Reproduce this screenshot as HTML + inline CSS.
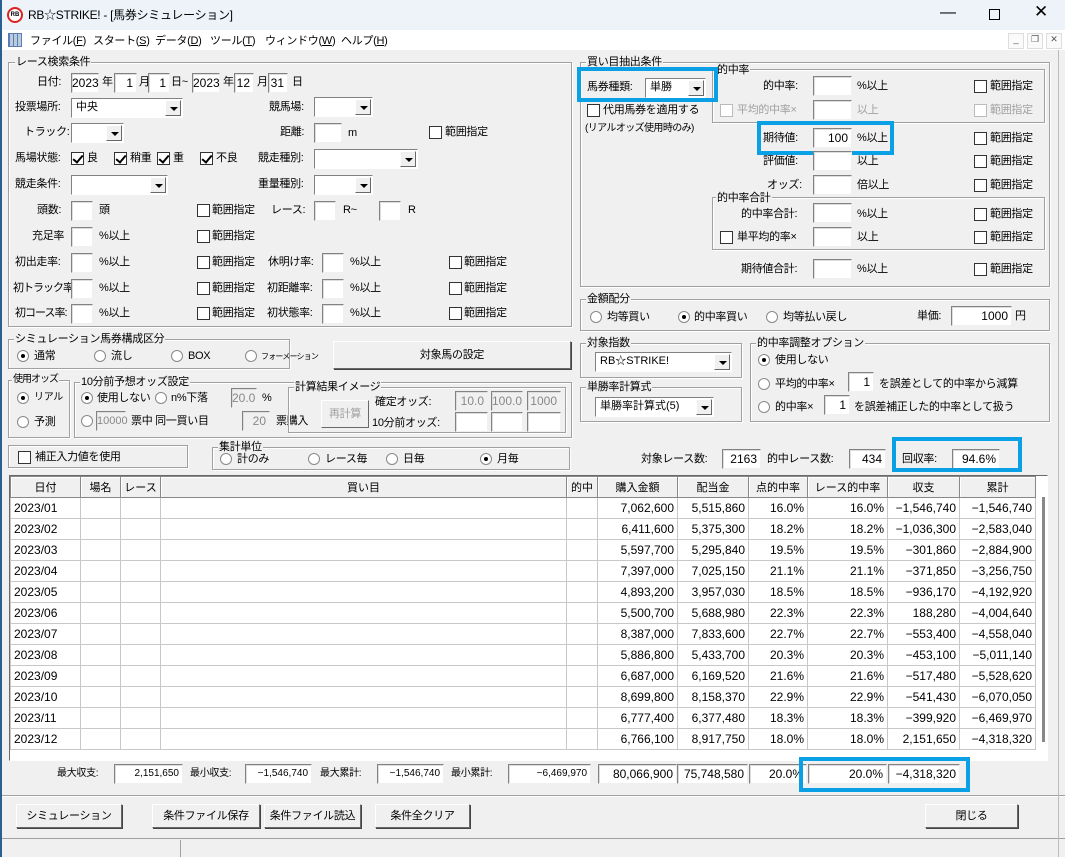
<!DOCTYPE html>
<html><head><meta charset="utf-8"><style>
*{box-sizing:border-box;margin:0;padding:0}
body{width:1065px;height:857px;position:relative;overflow:hidden;background:#f0f0f0;font-family:"Liberation Sans","Noto Sans CJK JP",sans-serif;font-size:11px;color:#000}
.a{position:absolute}
.t{position:absolute;white-space:nowrap;line-height:14px;font-size:11px;letter-spacing:-0.3px}
.g{color:#a0a0a0}
.in{position:absolute;background:#fff;border:1px solid;border-color:#828282 #f0f0f0 #f0f0f0 #828282;box-shadow:inset 1px 1px #ddd;height:20px;text-align:right;padding:2px 3px 0 0;line-height:14px;font-size:12px;white-space:nowrap}
.dis{background:#f0f0f0;color:#888}
.cb{position:absolute;width:13px;height:13px;background:#fff;border:1px solid #333}
.cb.on::after{content:"";position:absolute;left:3px;top:0px;width:4px;height:8px;border:solid #000;border-width:0 2px 2px 0;transform:rotate(40deg)}
.cb.dg{border-color:#bbb}
.rb{position:absolute;width:12px;height:12px;border-radius:50%;background:#fff;border:1px solid #888}
.rb.on::after{content:"";position:absolute;left:3px;top:3px;width:4px;height:4px;border-radius:50%;background:#000}
.grp{position:absolute;border:1px solid #a0a0a0;box-shadow:1px 1px #fff inset,1px 1px #fff}
.lg{position:absolute;top:-8px;left:6px;background:#f0f0f0;padding:0 1px;line-height:14px;white-space:nowrap;font-size:11px;letter-spacing:-0.3px}
.cmb{position:absolute;background:#fff;border:1px solid;border-color:#828282 #fff #fff #828282;height:20px;line-height:17px;padding-left:4px;white-space:nowrap;font-size:11px}
.cmb i{position:absolute;right:1px;top:1px;width:16px;height:16px;background:#f0f0f0;border:1px solid;border-color:#fff #696969 #696969 #fff}
.cmb i::after{content:"";position:absolute;left:4px;top:6px;border:4px solid transparent;border-top:4px solid #000;border-bottom:0}
.btn{position:absolute;background:#f0f0f0;border:1px solid;border-color:#fff #696969 #696969 #fff;box-shadow:1px 1px #444;text-align:center;white-space:nowrap;font-size:11px;letter-spacing:-0.3px}
.blue{position:absolute;border:4px solid #0aa0e6}
table{border-collapse:collapse;table-layout:fixed;font-size:12px}
td{border:1px solid #c8c8c8;height:21px;padding:0 3px;white-space:nowrap;text-align:right;line-height:14px}
td:first-child{text-align:left}
th{font-weight:normal;height:21px;border:1px solid #888;background:#f0f0f0;box-shadow:inset 1px 1px #fff;font-size:11px}
</style></head><body>
<!-- title -->
<div class="a" style="left:0;top:0;width:1065px;height:30px;background:#eef3f9"></div>
<div class="a" style="left:7px;top:7px;width:16px;height:16px;border-radius:50%;border:2px solid #d22;background:#fff;font-size:6px;font-weight:bold;text-align:center;line-height:12px">RB</div>
<div class="t" style="left:28px;top:8px;font-size:12px">RB☆STRIKE! - [馬券シミュレーション]</div>
<div class="t" style="left:940px;top:6px;font-size:16px">—</div>
<div class="a" style="left:989px;top:9px;width:11px;height:11px;border:1px solid #000"></div>
<div class="t" style="left:1034px;top:5px;font-size:17px">✕</div>
<!-- menu -->
<div class="a" style="left:0;top:30px;width:1065px;height:20px;background:#fff"></div>
<div class="a" style="left:8px;top:33px;width:14px;height:14px;background:repeating-linear-gradient(90deg,#5a7ab8 0 1px,#bcd 1px 4px),#bcd;border:1px solid #5a7ab8"></div>
<div class="t" style="left:30px;top:34px">ファイル(<u>F</u>)</div>
<div class="t" style="left:93px;top:34px">スタート(<u>S</u>)</div>
<div class="t" style="left:155px;top:34px">データ(<u>D</u>)</div>
<div class="t" style="left:210px;top:34px">ツール(<u>T</u>)</div>
<div class="t" style="left:265px;top:34px">ウィンドウ(<u>W</u>)</div>
<div class="t" style="left:341px;top:34px">ヘルプ(<u>H</u>)</div>
<div class="a" style="left:1008px;top:33px;width:16px;height:16px;border:1px solid #ddd;background:#fafafa;font-size:9px;text-align:center;color:#555">_</div>
<div class="a" style="left:1027px;top:33px;width:16px;height:16px;border:1px solid #ddd;background:#fafafa;font-size:9px;text-align:center;color:#555">❐</div>
<div class="a" style="left:1046px;top:33px;width:16px;height:16px;border:1px solid #ddd;background:#fafafa;font-size:9px;text-align:center;color:#555">✕</div>
<div class="a" style="left:0;top:0;width:2px;height:857px;background:#2a5f91"></div>

<!-- race search group -->
<div class="grp" style="left:8px;top:62px;width:564px;height:265px"><span class="lg">レース検索条件</span></div>
<div class="t" style="left:37px;top:75px">日付:</div>
<div class="in" style="left:71px;top:73px;width:28px">2023</div><div class="t" style="left:102px;top:75px">年</div>
<div class="in" style="left:114px;top:73px;width:23px">1</div><div class="t" style="left:139px;top:75px">月</div>
<div class="in" style="left:148px;top:73px;width:22px">1</div><div class="t" style="left:171px;top:75px">日~</div>
<div class="in" style="left:192px;top:73px;width:28px">2023</div><div class="t" style="left:223px;top:75px">年</div>
<div class="in" style="left:234px;top:73px;width:20px">12</div><div class="t" style="left:257px;top:75px">月</div>
<div class="in" style="left:268px;top:73px;width:20px">31</div><div class="t" style="left:292px;top:75px">日</div>

<div class="t" style="left:15px;top:100px">投票場所:</div>
<div class="cmb" style="left:71px;top:98px;width:112px">中央<i></i></div>
<div class="t" style="left:269px;top:100px">競馬場:</div>
<div class="cmb" style="left:314px;top:97px;width:59px"><i></i></div>

<div class="t" style="left:24px;top:125px">トラック:</div>
<div class="cmb" style="left:71px;top:123px;width:53px"><i></i></div>
<div class="t" style="left:280px;top:125px">距離:</div>
<div class="in" style="left:314px;top:123px;width:28px"></div><div class="t" style="left:348px;top:126px">m</div>
<div class="cb" style="left:429px;top:126px"></div><div class="t" style="left:445px;top:125px">範囲指定</div>

<div class="t" style="left:15px;top:151px">馬場状態:</div>
<div class="cb on" style="left:71px;top:152px"></div><div class="t" style="left:87px;top:151px">良</div>
<div class="cb on" style="left:114px;top:152px"></div><div class="t" style="left:130px;top:151px">稍重</div>
<div class="cb on" style="left:157px;top:152px"></div><div class="t" style="left:173px;top:151px">重</div>
<div class="cb on" style="left:200px;top:152px"></div><div class="t" style="left:216px;top:151px">不良</div>
<div class="t" style="left:258px;top:151px">競走種別:</div>
<div class="cmb" style="left:314px;top:149px;width:104px"><i></i></div>

<div class="t" style="left:15px;top:177px">競走条件:</div>
<div class="cmb" style="left:71px;top:175px;width:97px"><i></i></div>
<div class="t" style="left:258px;top:177px">重量種別:</div>
<div class="cmb" style="left:314px;top:175px;width:59px"><i></i></div>

<div class="t" style="left:37px;top:203px">頭数:</div>
<div class="in" style="left:71px;top:201px;width:22px"></div><div class="t" style="left:99px;top:203px">頭</div>
<div class="cb" style="left:197px;top:204px"></div><div class="t" style="left:212px;top:203px">範囲指定</div>
<div class="t" style="left:271px;top:203px">レース:</div>
<div class="in" style="left:314px;top:201px;width:22px"></div><div class="t" style="left:343px;top:203px">R~</div>
<div class="in" style="left:379px;top:201px;width:22px"></div><div class="t" style="left:408px;top:203px">R</div>

<div class="t" style="left:32px;top:229px">充足率</div>
<div class="in" style="left:71px;top:227px;width:22px"></div><div class="t" style="left:99px;top:229px">%以上</div>
<div class="cb" style="left:197px;top:230px"></div><div class="t" style="left:212px;top:229px">範囲指定</div>

<div class="t" style="left:15px;top:255px">初出走率:</div>
<div class="in" style="left:71px;top:253px;width:22px"></div><div class="t" style="left:99px;top:255px">%以上</div>
<div class="cb" style="left:197px;top:256px"></div><div class="t" style="left:212px;top:255px">範囲指定</div>
<div class="t" style="left:268px;top:255px">休明け率:</div>
<div class="in" style="left:322px;top:253px;width:22px"></div><div class="t" style="left:350px;top:255px">%以上</div>
<div class="cb" style="left:449px;top:256px"></div><div class="t" style="left:464px;top:255px">範囲指定</div>

<div class="t" style="left:13px;top:281px;letter-spacing:-1px">初トラック率:</div>
<div class="in" style="left:71px;top:279px;width:22px"></div><div class="t" style="left:99px;top:281px">%以上</div>
<div class="cb" style="left:197px;top:282px"></div><div class="t" style="left:212px;top:281px">範囲指定</div>
<div class="t" style="left:267px;top:281px">初距離率:</div>
<div class="in" style="left:322px;top:279px;width:22px"></div><div class="t" style="left:350px;top:281px">%以上</div>
<div class="cb" style="left:449px;top:282px"></div><div class="t" style="left:464px;top:281px">範囲指定</div>

<div class="t" style="left:15px;top:306px;letter-spacing:-1px">初コース率:</div>
<div class="in" style="left:71px;top:304px;width:22px"></div><div class="t" style="left:99px;top:306px">%以上</div>
<div class="cb" style="left:197px;top:307px"></div><div class="t" style="left:212px;top:306px">範囲指定</div>
<div class="t" style="left:267px;top:306px">初状態率:</div>
<div class="in" style="left:322px;top:304px;width:22px"></div><div class="t" style="left:350px;top:306px">%以上</div>
<div class="cb" style="left:449px;top:307px"></div><div class="t" style="left:464px;top:306px">範囲指定</div>

<!-- right group -->
<div class="grp" style="left:580px;top:62px;width:470px;height:225px"><span class="lg" style="left:5px">買い目抽出条件</span></div>
<div class="grp" style="left:712px;top:69px;width:333px;height:54px"><span class="lg" style="left:3px;top:-7px">的中率</span></div>
<div class="t" style="left:587px;top:80px">馬券種類:</div>
<div class="cmb" style="left:645px;top:78px;width:61px">単勝<i></i></div>
<div class="blue" style="left:577px;top:67px;width:141px;height:35px"></div>
<div class="cb" style="left:587px;top:104px"></div><div class="t" style="left:603px;top:103px">代用馬券を適用する</div>
<div class="t" style="left:585px;top:122px;font-size:10px;letter-spacing:-0.6px">(リアルオッズ使用時のみ)</div>

<div class="t" style="left:763px;top:79px">的中率:</div>
<div class="in" style="left:813px;top:76px;width:39px"></div><div class="t" style="left:857px;top:79px">%以上</div>
<div class="cb" style="left:974px;top:80px"></div><div class="t" style="left:990px;top:79px">範囲指定</div>
<div class="cb dg" style="left:720px;top:104px"></div><div class="t g" style="left:737px;top:103px">平均的中率×</div>
<div class="in" style="left:813px;top:100px;width:39px"></div><div class="t g" style="left:857px;top:103px">以上</div>
<div class="cb dg" style="left:974px;top:104px"></div><div class="t g" style="left:990px;top:103px">範囲指定</div>

<div class="t" style="left:763px;top:131px">期待値:</div>
<div class="in" style="left:813px;top:128px;width:39px">100</div><div class="t" style="left:857px;top:131px">%以上</div>
<div class="blue" style="left:757px;top:121px;width:137px;height:34px"></div>
<div class="cb" style="left:974px;top:132px"></div><div class="t" style="left:990px;top:131px">範囲指定</div>
<div class="t" style="left:763px;top:154px">評価値:</div>
<div class="in" style="left:813px;top:151px;width:39px"></div><div class="t" style="left:857px;top:154px">以上</div>
<div class="cb" style="left:974px;top:155px"></div><div class="t" style="left:990px;top:154px">範囲指定</div>
<div class="t" style="left:767px;top:178px">オッズ:</div>
<div class="in" style="left:813px;top:175px;width:39px"></div><div class="t" style="left:857px;top:178px">倍以上</div>
<div class="cb" style="left:974px;top:179px"></div><div class="t" style="left:990px;top:178px">範囲指定</div>
<div class="grp" style="left:712px;top:197px;width:333px;height:53px"><span class="lg" style="left:3px;top:-7px">的中率合計</span></div>
<div class="t" style="left:741px;top:207px">的中率合計:</div>
<div class="in" style="left:813px;top:203px;width:39px"></div><div class="t" style="left:857px;top:207px">%以上</div>
<div class="cb" style="left:974px;top:208px"></div><div class="t" style="left:990px;top:207px">範囲指定</div>
<div class="cb" style="left:720px;top:231px"></div><div class="t" style="left:737px;top:230px">単平均的率×</div>
<div class="in" style="left:813px;top:227px;width:39px"></div><div class="t" style="left:857px;top:230px">以上</div>
<div class="cb" style="left:974px;top:231px"></div><div class="t" style="left:990px;top:230px">範囲指定</div>
<div class="t" style="left:741px;top:262px">期待値合計:</div>
<div class="in" style="left:813px;top:259px;width:39px"></div><div class="t" style="left:857px;top:262px">%以上</div>
<div class="cb" style="left:974px;top:263px"></div><div class="t" style="left:990px;top:262px">範囲指定</div>

<!-- 金額配分 -->
<div class="grp" style="left:580px;top:299px;width:470px;height:32px"><span class="lg" style="left:5px">金額配分</span></div>
<div class="rb" style="left:590px;top:311px"></div><div class="t" style="left:607px;top:310px">均等買い</div>
<div class="rb on" style="left:678px;top:311px"></div><div class="t" style="left:694px;top:310px">的中率買い</div>
<div class="rb" style="left:766px;top:311px"></div><div class="t" style="left:783px;top:310px">均等払い戻し</div>
<div class="t" style="left:917px;top:309px">単価:</div>
<div class="in" style="left:951px;top:306px;width:61px">1000</div><div class="t" style="left:1015px;top:309px">円</div>

<div class="grp" style="left:580px;top:343px;width:162px;height:35px"><span class="lg" style="left:5px">対象指数</span></div>
<div class="cmb" style="left:595px;top:352px;width:137px">RB☆STRIKE!<i></i></div>
<div class="grp" style="left:580px;top:387px;width:162px;height:35px"><span class="lg" style="left:5px">単勝率計算式</span></div>
<div class="cmb" style="left:595px;top:397px;width:119px">単勝率計算式(5)<i></i></div>
<div class="grp" style="left:750px;top:343px;width:300px;height:79px"><span class="lg" style="left:5px">的中率調整オプション</span></div>
<div class="rb on" style="left:758px;top:354px"></div><div class="t" style="left:775px;top:353px">使用しない</div>
<div class="rb" style="left:758px;top:378px"></div><div class="t" style="left:775px;top:377px">平均的中率×</div>
<div class="in" style="left:848px;top:372px;width:26px">1</div><div class="t" style="left:879px;top:377px">を誤差として的中率から減算</div>
<div class="rb" style="left:758px;top:401px"></div><div class="t" style="left:775px;top:400px">的中率×</div>
<div class="in" style="left:824px;top:395px;width:26px">1</div><div class="t" style="left:854px;top:400px">を誤差補正した的中率として扱う</div>

<div class="t" style="left:641px;top:452px">対象レース数:</div>
<div class="in" style="left:722px;top:449px;width:39px">2163</div>
<div class="t" style="left:767px;top:452px">的中レース数:</div>
<div class="in" style="left:849px;top:449px;width:37px">434</div>
<div class="t" style="left:902px;top:452px">回収率:</div>
<div class="in" style="left:952px;top:449px;width:48px">94.6%</div>
<div class="blue" style="left:892px;top:437px;width:130px;height:35px"></div>

<!-- lower left -->
<div class="grp" style="left:8px;top:339px;width:282px;height:30px"><span class="lg" style="left:5px">シミュレーション馬券構成区分</span></div>
<div class="rb on" style="left:17px;top:350px"></div><div class="t" style="left:34px;top:349px">通常</div>
<div class="rb" style="left:94px;top:350px"></div><div class="t" style="left:111px;top:349px">流し</div>
<div class="rb" style="left:171px;top:350px"></div><div class="t" style="left:188px;top:349px">BOX</div>
<div class="rb" style="left:245px;top:350px"></div><div class="t" style="left:261px;top:350px;font-size:8px;letter-spacing:-0.8px">フォーメーション</div>
<div class="btn" style="left:333px;top:341px;width:238px;height:28px;line-height:26px">対象馬の設定</div>

<div class="grp" style="left:8px;top:380px;width:62px;height:58px"><span class="lg" style="left:3px;font-size:10px;letter-spacing:-1px">使用オッズ</span></div>
<div class="rb on" style="left:17px;top:392px"></div><div class="t" style="left:34px;top:391px;font-size:10px">リアル</div>
<div class="rb" style="left:17px;top:416px"></div><div class="t" style="left:34px;top:415px">予測</div>
<div class="grp" style="left:74px;top:382px;width:498px;height:56px"><span class="lg" style="left:5px">10分前予想オッズ設定</span></div>
<div class="rb on" style="left:81px;top:392px"></div><div class="t" style="left:97px;top:391px">使用しない</div>
<div class="rb" style="left:155px;top:392px"></div><div class="t" style="left:171px;top:391px">n%下落</div>
<div class="in dis" style="left:231px;top:388px;width:26px">20.0</div><div class="t" style="left:262px;top:391px">%</div>
<div class="rb" style="left:81px;top:415px"></div>
<div class="in dis" style="left:96px;top:411px;width:30px;font-size:11px">10000</div>
<div class="t" style="left:131px;top:414px">票中 同一買い目</div>
<div class="in dis" style="left:242px;top:411px;width:28px">20</div><div class="t" style="left:276px;top:414px">票購入</div>
<div class="grp" style="left:288px;top:387px;width:278px;height:46px"><span class="lg" style="left:5px">計算結果イメージ</span></div>
<div class="btn" style="left:321px;top:400px;width:48px;height:28px;line-height:26px;color:#a0a0a0;box-shadow:none">再計算</div>
<div class="t" style="left:375px;top:395px">確定オッズ:</div>
<div class="in dis" style="left:455px;top:391px;width:33px">10.0</div>
<div class="in dis" style="left:491px;top:391px;width:32px">100.0</div>
<div class="in dis" style="left:527px;top:391px;width:34px">1000</div>
<div class="t" style="left:372px;top:416px">10分前オッズ:</div>
<div class="in" style="left:455px;top:412px;width:33px"></div>
<div class="in" style="left:491px;top:412px;width:32px"></div>
<div class="in" style="left:527px;top:412px;width:34px"></div>

<div class="grp" style="left:8px;top:445px;width:180px;height:23px"></div>
<div class="cb" style="left:18px;top:451px"></div><div class="t" style="left:35px;top:450px">補正入力値を使用</div>
<div class="grp" style="left:212px;top:447px;width:358px;height:23px"><span class="lg" style="left:5px">集計単位</span></div>
<div class="rb" style="left:220px;top:453px"></div><div class="t" style="left:237px;top:452px">計のみ</div>
<div class="rb" style="left:308px;top:453px"></div><div class="t" style="left:325px;top:452px">レース毎</div>
<div class="rb" style="left:386px;top:453px"></div><div class="t" style="left:403px;top:452px">日毎</div>
<div class="rb on" style="left:480px;top:453px"></div><div class="t" style="left:497px;top:452px">月毎</div>

<!-- table -->
<div class="a" style="left:9px;top:475px;width:1039px;height:286px;background:#fff;border:1px solid;border-color:#696969 #fff #fff #696969"></div>
<table class="a" style="left:10px;top:476px;width:1025px">
<colgroup><col style="width:70px"><col style="width:40px"><col style="width:40px"><col style="width:406px"><col style="width:31px"><col style="width:80px"><col style="width:71px"><col style="width:59px"><col style="width:80px"><col style="width:72px"><col style="width:76px"></colgroup>
<tr><th>日付</th><th>場名</th><th>レース</th><th>買い目</th><th>的中</th><th>購入金額</th><th>配当金</th><th>点的中率</th><th>レース的中率</th><th>収支</th><th>累計</th></tr>
<tr><td>2023/01</td><td></td><td></td><td></td><td></td><td>7,062,600</td><td>5,515,860</td><td>16.0%</td><td>16.0%</td><td>−1,546,740</td><td>−1,546,740</td></tr>
<tr><td>2023/02</td><td></td><td></td><td></td><td></td><td>6,411,600</td><td>5,375,300</td><td>18.2%</td><td>18.2%</td><td>−1,036,300</td><td>−2,583,040</td></tr>
<tr><td>2023/03</td><td></td><td></td><td></td><td></td><td>5,597,700</td><td>5,295,840</td><td>19.5%</td><td>19.5%</td><td>−301,860</td><td>−2,884,900</td></tr>
<tr><td>2023/04</td><td></td><td></td><td></td><td></td><td>7,397,000</td><td>7,025,150</td><td>21.1%</td><td>21.1%</td><td>−371,850</td><td>−3,256,750</td></tr>
<tr><td>2023/05</td><td></td><td></td><td></td><td></td><td>4,893,200</td><td>3,957,030</td><td>18.5%</td><td>18.5%</td><td>−936,170</td><td>−4,192,920</td></tr>
<tr><td>2023/06</td><td></td><td></td><td></td><td></td><td>5,500,700</td><td>5,688,980</td><td>22.3%</td><td>22.3%</td><td>188,280</td><td>−4,004,640</td></tr>
<tr><td>2023/07</td><td></td><td></td><td></td><td></td><td>8,387,000</td><td>7,833,600</td><td>22.7%</td><td>22.7%</td><td>−553,400</td><td>−4,558,040</td></tr>
<tr><td>2023/08</td><td></td><td></td><td></td><td></td><td>5,886,800</td><td>5,433,700</td><td>20.3%</td><td>20.3%</td><td>−453,100</td><td>−5,011,140</td></tr>
<tr><td>2023/09</td><td></td><td></td><td></td><td></td><td>6,687,000</td><td>6,169,520</td><td>21.6%</td><td>21.6%</td><td>−517,480</td><td>−5,528,620</td></tr>
<tr><td>2023/10</td><td></td><td></td><td></td><td></td><td>8,699,800</td><td>8,158,370</td><td>22.9%</td><td>22.9%</td><td>−541,430</td><td>−6,070,050</td></tr>
<tr><td>2023/11</td><td></td><td></td><td></td><td></td><td>6,777,400</td><td>6,377,480</td><td>18.3%</td><td>18.3%</td><td>−399,920</td><td>−6,469,970</td></tr>
<tr><td>2023/12</td><td></td><td></td><td></td><td></td><td>6,766,100</td><td>8,917,750</td><td>18.0%</td><td>18.0%</td><td>2,151,650</td><td>−4,318,320</td></tr>
</table>
<div class="a" style="left:1042px;top:497px;width:3px;height:245px;background:#888"></div>

<!-- totals -->
<div class="t" style="left:57px;top:767px;font-size:10px">最大収支:</div>
<div class="in" style="left:114px;top:764px;width:69px;font-size:10px">2,151,650</div>
<div class="t" style="left:190px;top:767px;font-size:10px">最小収支:</div>
<div class="in" style="left:245px;top:764px;width:67px;font-size:10px">−1,546,740</div>
<div class="t" style="left:320px;top:767px;font-size:10px">最大累計:</div>
<div class="in" style="left:377px;top:764px;width:67px;font-size:10px">−1,546,740</div>
<div class="t" style="left:451px;top:767px;font-size:10px">最小累計:</div>
<div class="in" style="left:508px;top:764px;width:83px;font-size:10px">−6,469,970</div>
<div class="in" style="left:598px;top:764px;width:79px">80,066,900</div>
<div class="in" style="left:677px;top:764px;width:71px">75,748,580</div>
<div class="in" style="left:749px;top:764px;width:58px">20.0%</div>
<div class="in" style="left:808px;top:764px;width:79px">20.0%</div>
<div class="in" style="left:888px;top:764px;width:72px">−4,318,320</div>
<div class="blue" style="left:799px;top:757px;width:171px;height:35px"></div>

<div class="a" style="left:2px;top:795px;width:1063px;height:1px;background:#a0a0a0"></div>
<div class="a" style="left:2px;top:796px;width:1063px;height:1px;background:#fff"></div>
<div class="btn" style="left:16px;top:804px;width:106px;height:24px;line-height:22px">シミュレーション</div>
<div class="btn" style="left:152px;top:804px;width:108px;height:24px;line-height:22px">条件ファイル保存</div>
<div class="btn" style="left:264px;top:804px;width:97px;height:24px;line-height:22px">条件ファイル読込</div>
<div class="btn" style="left:375px;top:804px;width:95px;height:24px;line-height:22px">条件全クリア</div>
<div class="btn" style="left:925px;top:804px;width:93px;height:24px;line-height:22px">閉じる</div>

<div class="a" style="left:2px;top:838px;width:1063px;height:1px;background:#a0a0a0"></div>
<div class="a" style="left:180px;top:840px;width:1px;height:17px;background:#a0a0a0"></div>
<div class="a" style="left:1058px;top:50px;width:1px;height:807px;background:#bbb"></div>
</body></html>
